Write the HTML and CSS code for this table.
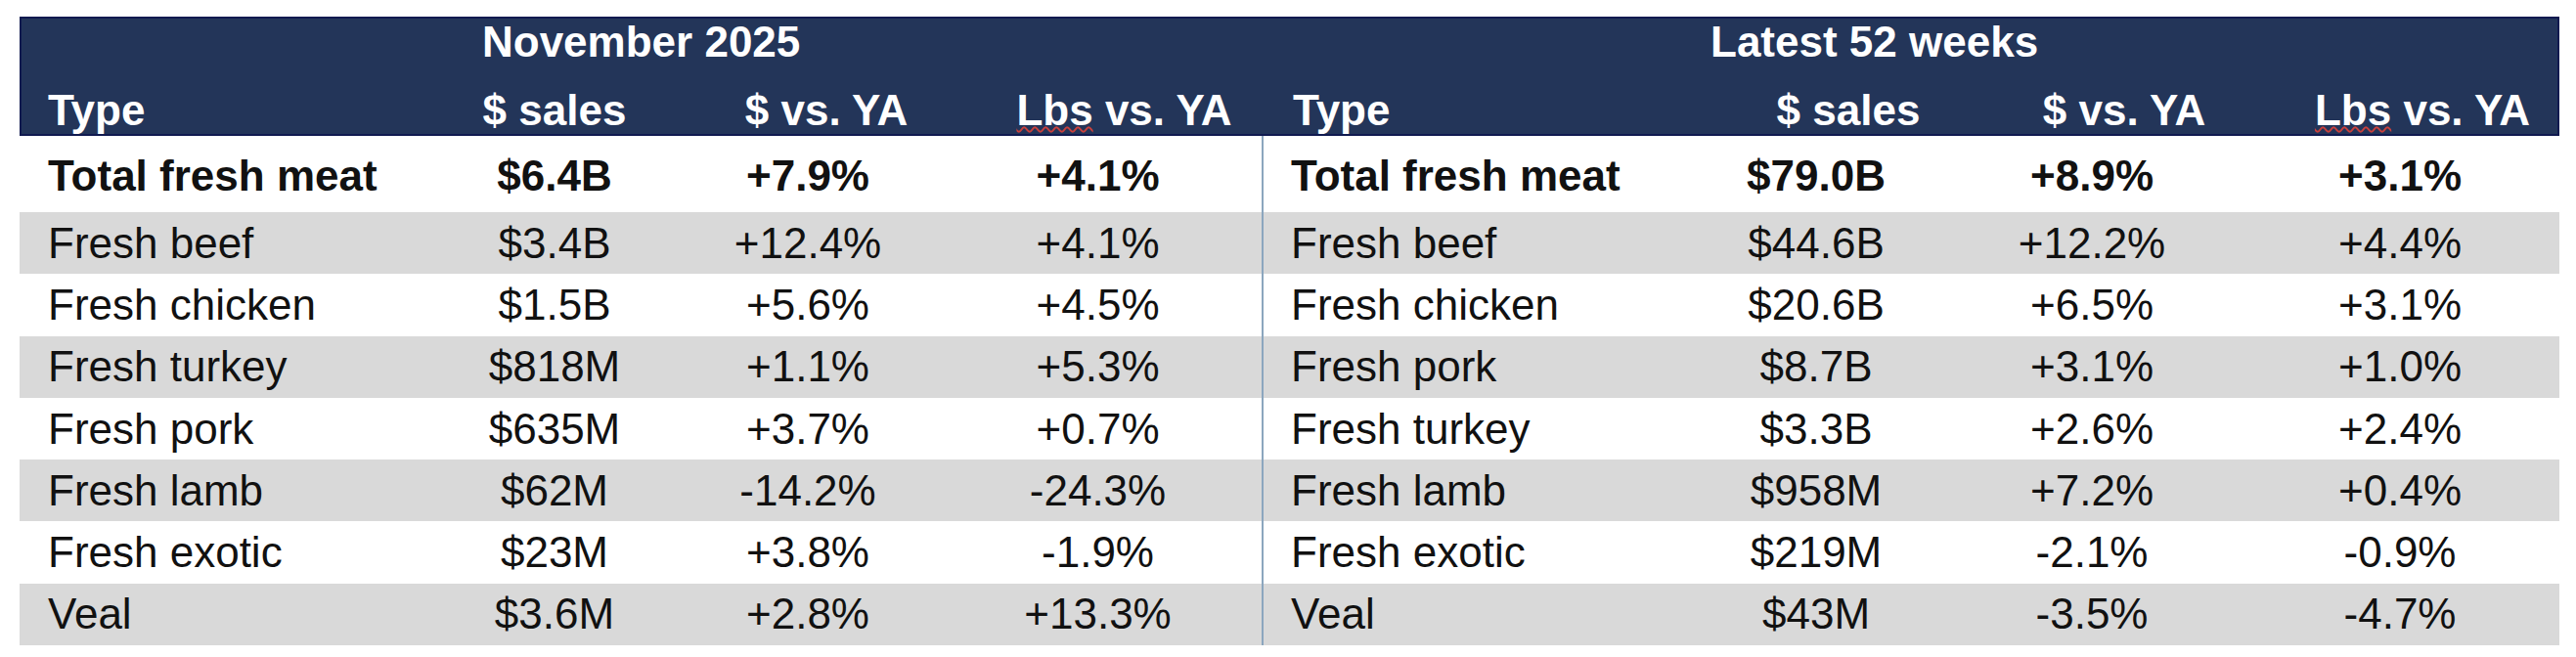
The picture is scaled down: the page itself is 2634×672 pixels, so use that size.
FILE: index.html
```html
<!DOCTYPE html>
<html lang="en">
<head>
<meta charset="utf-8">
<title>Fresh meat sales</title>
<link rel="stylesheet" href="styles.css">
</head>
<body>
<table class="meat">
  <colgroup>
    <col class="w-type-l"><col class="w-sales-l"><col class="w-vs-l"><col class="w-lbs-l">
    <col class="w-type-r"><col class="w-sales-r"><col class="w-vs-r"><col class="w-lbs-r">
  </colgroup>
  <thead>
    <tr class="h1">
      <th class="edge-l"></th>
      <th colspan="3" class="title-l">November 2025</th>
      <th></th>
      <th colspan="3" class="title-r edge-r">Latest 52 weeks</th>
    </tr>
    <tr class="h2">
      <th class="edge-l type-l">Type</th>
      <th class="hs-l">$ sales</th>
      <th class="hv-l">$ vs. YA</th>
      <th class="hl-l"><span class="spell">Lbs</span> vs. YA</th>
      <th class="type-r">Type</th>
      <th class="hs-r">$ sales</th>
      <th class="hv-r">$ vs. YA</th>
      <th class="hl-r edge-r"><span class="spell">Lbs</span> vs. YA</th>
    </tr>
  </thead>
  <tbody>
    <tr class="total">
      <td class="type-l">Total fresh meat</td><td>$6.4B</td><td>+7.9%</td><td>+4.1%</td>
      <td class="type-r div">Total fresh meat</td><td>$79.0B</td><td>+8.9%</td><td>+3.1%</td>
    </tr>
    <tr class="row gray">
      <td class="type-l">Fresh beef</td><td>$3.4B</td><td>+12.4%</td><td>+4.1%</td>
      <td class="type-r div">Fresh beef</td><td>$44.6B</td><td>+12.2%</td><td>+4.4%</td>
    </tr>
    <tr class="row">
      <td class="type-l">Fresh chicken</td><td>$1.5B</td><td>+5.6%</td><td>+4.5%</td>
      <td class="type-r div">Fresh chicken</td><td>$20.6B</td><td>+6.5%</td><td>+3.1%</td>
    </tr>
    <tr class="row gray">
      <td class="type-l">Fresh turkey</td><td>$818M</td><td>+1.1%</td><td>+5.3%</td>
      <td class="type-r div">Fresh pork</td><td>$8.7B</td><td>+3.1%</td><td>+1.0%</td>
    </tr>
    <tr class="row">
      <td class="type-l">Fresh pork</td><td>$635M</td><td>+3.7%</td><td>+0.7%</td>
      <td class="type-r div">Fresh turkey</td><td>$3.3B</td><td>+2.6%</td><td>+2.4%</td>
    </tr>
    <tr class="row gray">
      <td class="type-l">Fresh lamb</td><td>$62M</td><td>-14.2%</td><td>-24.3%</td>
      <td class="type-r div">Fresh lamb</td><td>$958M</td><td>+7.2%</td><td>+0.4%</td>
    </tr>
    <tr class="row">
      <td class="type-l">Fresh exotic</td><td>$23M</td><td>+3.8%</td><td>-1.9%</td>
      <td class="type-r div">Fresh exotic</td><td>$219M</td><td>-2.1%</td><td>-0.9%</td>
    </tr>
    <tr class="row gray">
      <td class="type-l">Veal</td><td>$3.6M</td><td>+2.8%</td><td>+13.3%</td>
      <td class="type-r div">Veal</td><td>$43M</td><td>-3.5%</td><td>-4.7%</td>
    </tr>
  </tbody>
</table>
</body>
</html>
```

FILE: styles.css
```css
html, body {
  margin: 0;
  padding: 0;
  background: #ffffff;
}

body {
  padding: 17px 0 0 20px;
  font-family: "Liberation Sans", Arial, sans-serif;
  font-size: 44px;
  color: #111111;
}

.meat {
  border-collapse: separate;
  border-spacing: 0;
  table-layout: fixed;
  width: 2597px;
}

.w-type-l { width: 417px; }
.w-sales-l { width: 260px; }
.w-vs-l { width: 258px; }
.w-lbs-l { width: 335px; }
.w-type-r { width: 437px; }
.w-sales-r { width: 260px; }
.w-vs-r { width: 304px; }
.w-lbs-r { width: 326px; }

.meat th,
.meat td {
  box-sizing: border-box;
  padding: 0;
  white-space: nowrap;
  line-height: 48px;
}

/* header */
.meat thead th {
  background: #233559;
  color: #ffffff;
  font-weight: bold;
  text-align: center;
  vertical-align: top;
}

.h1 th {
  height: 50px;
  border-top: 2px solid #101a50;
}

.h2 th {
  height: 72px;
  padding-top: 22px;
  border-bottom: 2px solid #101a50;
}

.meat thead .edge-l { border-left: 2px solid #101a50; }
.meat thead .edge-r { border-right: 2px solid #101a50; }

.meat thead .title-l { text-align: left; padding-left: 56px; }
.meat thead .title-r { text-align: left; padding-left: 22px; }

.meat thead .type-l { text-align: left; padding-left: 27px; }
.meat thead .type-r { text-align: left; padding-left: 32px; }

.meat thead .hv-l { padding-left: 38px; }
.meat thead .hl-l { padding-left: 54px; }
.meat thead .hs-r { padding-left: 66px; }
.meat thead .hv-r { padding-left: 66px; }
.meat thead .hl-r { padding-left: 48px; }

.spell {
  text-decoration-line: underline;
  text-decoration-style: wavy;
  text-decoration-color: #c8403c;
  text-decoration-thickness: 2px;
  text-underline-offset: 1px;
}

/* body */
.meat tbody td {
  text-align: center;
  vertical-align: middle;
}

.meat tbody .type-l { text-align: left; padding-left: 29px; }
.meat tbody .type-r { text-align: left; padding-left: 28px; }

.meat tbody .div { border-left: 2px solid #8ca6be; }

.total td {
  height: 78px;
  padding-top: 4px;
  font-weight: bold;
}

.row td {
  height: 63.3px;
}

.gray td {
  background: #d9d9d9;
}
```
